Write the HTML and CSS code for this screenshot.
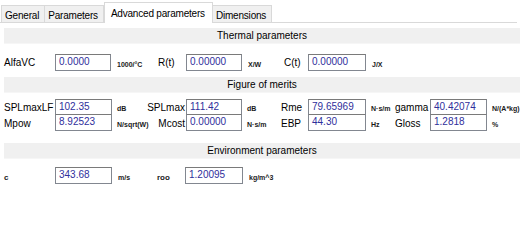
FILE: index.html
```html
<!DOCTYPE html>
<html lang="en">
<head>
  <meta charset="UTF-8">
  <title>Advanced parameters</title>
  <link rel="stylesheet" href="styles.css">
</head>
<body>
  <div class="tabs">
    <div class="tab">General</div>
    <div class="tab">Parameters</div>
    <div class="tab active">Advanced parameters</div>
    <div class="tab">Dimensions</div>
  </div>

  <div class="panel">
    <div class="sectionHead">Thermal parameters</div>
    <div class="row thermalRow">
      <span class="lbl">AlfaVC</span>
      <span class="box">0.0000</span>
      <span class="unit">1000/°C</span>
      <span class="lbl">R(t)</span>
      <span class="box">0.00000</span>
      <span class="unit">X/W</span>
      <span class="lbl">C(t)</span>
      <span class="box">0.00000</span>
      <span class="unit">J/X</span>
    </div>

    <div class="sectionHead">Figure of merits</div>
    <div class="row meritRow">
      <span class="lbl">SPLmaxLF</span>
      <span class="box">102.35</span>
      <span class="unit">dB</span>
      <span class="lbl right">SPLmax</span>
      <span class="box">111.42</span>
      <span class="unit">dB</span>
      <span class="lbl">Rme</span>
      <span class="box">79.65969</span>
      <span class="unit">N·s/m</span>
      <span class="lbl">gamma</span>
      <span class="box">40.42074</span>
      <span class="unit">N/(A*kg)</span>

      <span class="lbl">Mpow</span>
      <span class="box second">8.92523</span>
      <span class="unit">N/sqrt(W)</span>
      <span class="lbl right">Mcost</span>
      <span class="box second">0.00000</span>
      <span class="unit">N·s/m</span>
      <span class="lbl">EBP</span>
      <span class="box second">44.30</span>
      <span class="unit">Hz</span>
      <span class="lbl">Gloss</span>
      <span class="box second">1.2818</span>
      <span class="unit">%</span>
    </div>

    <div class="sectionHead envHead">Environment parameters</div>
    <div class="row envRow">
      <span class="unit small">c</span>
      <span class="box">343.68</span>
      <span class="unit">m/s</span>
      <span class="unit small">roo</span>
      <span class="box">1.20095</span>
      <span class="unit">kg/m^3</span>
    </div>
  </div>
</body>
</html>
```

FILE: styles.css
```css
* {
  box-sizing: border-box;
  margin: 0;
  padding: 0;
}
body {
  background-color: #fff;
  font-family: "Liberation Sans", Arial, sans-serif;
  font-size: 10px;
  color: #000;
  width: 523px;
  height: 250px;
  overflow: hidden;
}

.tabs {
  display: flex;
  align-items: flex-end;
  height: 23px;
  width: 517px;
  padding-left: 1px;
  border-bottom: 1px solid #d9d9d9;
}
.tab {
  height: 17px;
  padding: 4px 5px 0 3px;
  letter-spacing: -0.2px;
  background-color: #f0f0f0;
  border: 1px solid #d9d9d9;
  border-bottom: none;
}
.tab + .tab {
  border-left: none;
}
.tab.active {
  height: 21px;
  padding: 5px 7px 0 6px;
  background-color: #fff;
  border-left: 1px solid #d9d9d9;
  margin-bottom: -1px;
}
.tab.active + .tab {
  border-left: none;
}

.panel {
  padding: 5px 3px 0 4px;
}
.sectionHead {
  height: 16px;
  line-height: 15px;
  text-align: center;
  background-color: #f0f0f0;
  border-bottom: 1px solid #f6f6f6;
}
.envHead {
  margin-top: 12px;
}

.row {
  display: grid;
  align-items: center;
}
.thermalRow {
  grid-template-columns: 51px 56px 47px 28px 56px 42px 24px 58px auto;
  height: 17px;
  margin: 10px 0 6px;
}
.meritRow {
  grid-template-columns: 51px 57px 35px 39px 56px 39px 27px 58px 29px 35px 57px auto;
  grid-auto-rows: 16px;
  margin: 6px 0 0;
}
.envRow {
  grid-template-columns: 51px 57px 45px 28px 58px auto;
  height: 17px;
  margin-top: 8px;
}

.lbl {
  white-space: nowrap;
}
.lbl.right {
  text-align: right;
  padding-right: 1px;
}
.box {
  height: 17px;
  border: 1px solid #828790;
  border-top-color: #7a7a7a;
  background-color: #fff;
  color: #2f2f9c;
  padding: 1px 0 0 3px;
  line-height: 12px;
  white-space: nowrap;
}
.meritRow .box {
  align-self: start;
}
.meritRow .box.second {
  margin-top: -1px;
}
.unit {
  font-size: 7px;
  font-weight: bold;
  color: #1a1a1a;
  padding-left: 6px;
  white-space: nowrap;
  padding-top: 3px;
}
.meritRow .unit {
  padding-left: 5px;
}
.unit.small {
  padding-left: 0;
  font-size: 8px;
}
```
